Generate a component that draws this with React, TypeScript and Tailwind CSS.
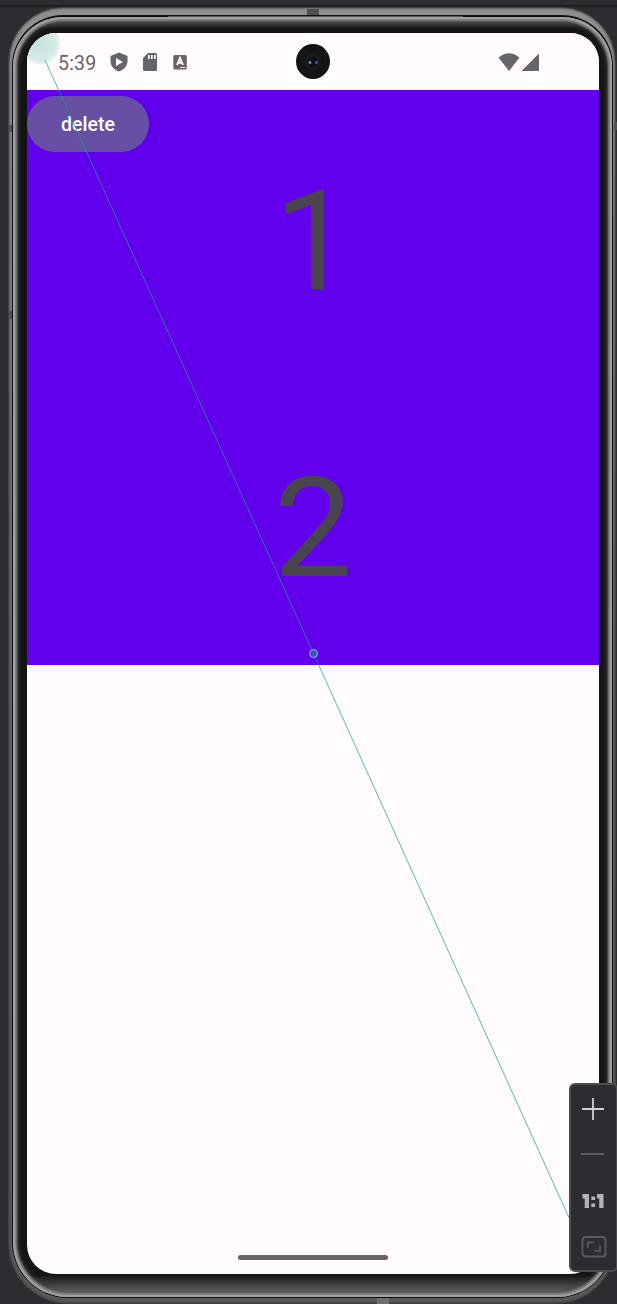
function ShieldIcon() {
  return (
    <svg width="20" height="22" viewBox="0 0 20 22" fill="currentColor">
      <path fillRule="evenodd" d="M10 1.500 18.500 5V10c0 5.200-3.500 8.800-8.500 10.500C5 18.800 1.500 15.200 1.500 10V5ZM7 7v8l7-4Z" />
    </svg>
  );
}

function StorageIcon() {
  return (
    <svg width="16" height="20" viewBox="0 0 16 20" fill="currentColor">
      <path fillRule="evenodd" d="M6 1h7.500a1.500 1.500 0 0 1 1.500 1.500v15a1.500 1.500 0 0 1-1.500 1.500h-11A1.500 1.500 0 0 1 1 17.500V6ZM6 3v4h1.700V3ZM9 3v4h1.700V3ZM12 3v4h1.700V3Z" />
    </svg>
  );
}

function LetterIcon() {
  return (
    <svg width="18" height="18" viewBox="0 0 18 18">
      <rect x="2.300" y="2" width="13.500" height="14.500" rx="1.500" fill="#66636a" />
      <path d="M6 12 9 5 12 12M7 9.700h4" fill="none" stroke="#fffbff" strokeWidth="1.900" />
      <path d="M9 14.500h5.500" stroke="#fffbff" strokeWidth=".8" />
    </svg>
  );
}

function CameraHole() {
  return (
    <svg width="34" height="35" viewBox="0 0 34 35">
      <ellipse cx="17" cy="17.500" rx="17" ry="17.500" fill="#141414" />
      <circle cx="17" cy="18" r="8" fill="#1d1d1f" />
      <circle cx="17" cy="18" r="5.500" fill="#101116" />
      <ellipse cx="14" cy="18.500" rx="1.400" ry="1.800" fill="#58959d" />
      <ellipse cx="20.500" cy="18.500" rx="1.400" ry="1.800" fill="#4359b4" />
    </svg>
  );
}

function StatusBar() {
  return (
    <div className="grid h-[57px] shrink-0 grid-cols-[1fr_34px_1fr] items-center bg-[#fffbff] text-[#66636a]">
      <div className="flex items-center pl-[31px] pt-px">
        <span className="w-[51px] pt-[3px] text-[19.5px] leading-none tracking-[0.2px]">5:39</span>
        <div className="flex items-center gap-[13px]">
          <ShieldIcon />
          <StorageIcon />
          <LetterIcon />
        </div>
      </div>
      <CameraHole />
      <div className="flex justify-end pr-[58px]">
        <svg width="44" height="20" viewBox="0 0 44 20" fill="currentColor">
          <path d="M1.500 5.500Q12 -3.200 22.500 5.500L12 19ZM24.500 19 42 1.500V19Z" />
        </svg>
      </div>
    </div>
  );
}

function ZoomControls() {
  return (
    <div className="absolute -right-px bottom-8 grid h-[189px] w-[49px] grid-rows-[48px_42px_52px_39px] place-items-center rounded-[6px] border-2 border-[#4b4d50] bg-[#2b2d30] pr-[2px]">
      <svg width="24" height="24" viewBox="0 0 24 24">
        <path d="M1 12h22M12 1v22" stroke="#ced0d6" strokeWidth="1.800" />
      </svg>
      <div className="h-[2px] w-[23px] bg-[#5a5c5d]" />
      <svg width="22" height="18" viewBox="0 0 22 18" fill="#b1b3b6">
        <path d="M0.500 2H7V16H2.700V6.500H.5ZM15 2H21.500V16H17.200V6.500H15ZM9.300 4.500h3.800v3.500H9.300ZM9.300 11.500h3.800v3.500H9.300Z" />
      </svg>
      <svg className="ml-[2px]" width="26" height="24" viewBox="0 0 26 24" fill="none" stroke="#5a5c5d">
        <rect x="1.500" y="2" width="23" height="19.500" rx="3" strokeWidth="1.800" />
        <path d="M6.800 12.500V7.500H13M13 16H19V10.500" strokeWidth="1.700" />
      </svg>
    </div>
  );
}

export default function App() {
  return (
    <div className="relative flex h-[1304px] w-[617px] flex-col overflow-hidden bg-[#2b2d30] font-['Roboto',sans-serif]">
      <div className="h-[7px] shrink-0 border-b-2 border-[#1e1f22]" />
      <div className="ml-2 h-[1297px] w-[608px] rounded-[55px_55px_60px_60px] border border-[#414141] bg-linear-to-b from-[#909090] via-[#666] to-[#595959] p-[3px] pb-[5px] pr-[2px] pt-[7px] shadow-[inset_0_0_3px_#333]">
        <div className="h-full rounded-[51px_51px_56px_56px] bg-[#101010] p-px pt-[2px]">
          <div className="h-full rounded-[50px_50px_55px_55px] bg-[linear-gradient(to_bottom,#666_0px,#141414_12px,#141414_1258px,#707070_1278px)] pb-[23px] pl-[14px] pr-[13px] pt-[16px] shadow-[inset_0_0_0_2px_#a0a0a0,inset_0_0_2px_4px_#858585,inset_0_0_6px_4px_#444]">
            <div className="relative flex h-full flex-col overflow-hidden rounded-[29px] bg-[#fffbff]">
              <StatusBar />
              <main className="relative grid h-[575px] grid-rows-[288px_287px] bg-[#6200ed] text-[140px] leading-none text-[#49454f]">
                <div className="flex items-center justify-center pt-[14px]">1</div>
                <div className="flex items-center justify-center pt-[12px]">2</div>
                <button className="absolute left-0 top-1.5 h-[56px] w-[122px] rounded-full bg-[#6750a4] pt-[2px] text-[19.500px] font-medium text-white">
                  delete
                </button>
              </main>
              <div className="mx-auto mb-[14px] mt-auto h-[5px] w-[150px] rounded-full bg-[#66636a]" />
              <div className="absolute -left-[6px] -top-[8px] h-[38px] w-[38px] rounded-full border-2 border-[#e0f0ee] bg-[radial-gradient(circle,#c5e2de,#dceeea)] outline outline-[#dcefec]" />
            </div>
          </div>
        </div>
      </div>
      <svg className="pointer-events-none absolute inset-0" width="617" height="1304" fill="none">
        <path d="M307 9h12v6h-12ZM9 125h3v7H9ZM9 311h3v8H9ZM614 122h3v8h-3Z" fill="#505050" />
        <path d="M377 1298h12v6h-12Z" fill="#707070" />
        <path d="M168 16.500H463" stroke="#555" />
        <path d="M45 60 313.500 653.500 571 1222" stroke="#169f86" strokeOpacity=".72" />
        <circle cx="313.500" cy="653.500" r="4" fill="#2e5bae" stroke="#b6a2ed" />
      </svg>
      <ZoomControls />
    </div>
  );
}
